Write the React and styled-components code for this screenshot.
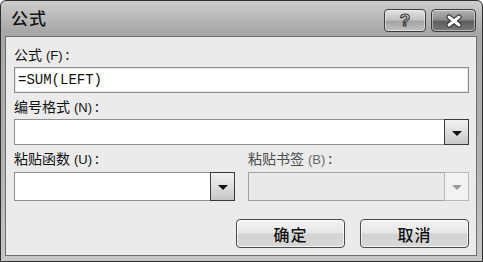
import React from 'react';
import styled, { createGlobalStyle } from 'styled-components';

const GlobalStyle = createGlobalStyle`
  html, body {
    margin: 0;
    padding: 0;
    background: #ffffff;
  }
  body {
    font-family: "Noto Sans CJK SC", "Liberation Sans", sans-serif;
  }
`;

const Window = styled.div`
  width: 483px;
  height: 262px;
  box-sizing: border-box;
  border: 1px solid #2e2e2e;
  border-radius: 6px 6px 0 0;
  background: linear-gradient(180deg, #cdcdcd 0%, #a7a7a7 12%, #b1b1b1 60%, #c6c6c6 100%);
  display: flex;
  flex-direction: column;
  overflow: hidden;
`;

const TitleBar = styled.div`
  height: 35px;
  display: flex;
  align-items: center;
  justify-content: space-between;
  padding: 0 6px 0 10px;
  flex-shrink: 0;
`;

const Title = styled.span`
  font-size: 17px;
  font-weight: 500;
  color: #111;
  letter-spacing: 1px;
  margin-top: -2px;
`;

const Caption = styled.div`
  display: flex;
  gap: 5px;
  margin-top: 4px;
`;

const CaptionButton = styled.div`
  width: ${p => p.$w}px;
  height: 23px;
  box-sizing: border-box;
  border: 1px solid #3c3c3c;
  border-radius: 4px;
  display: flex;
  align-items: center;
  justify-content: center;
  box-shadow: inset 0 0 0 1px rgba(255, 255, 255, 0.45);
  background: ${p => p.$dark
    ? 'linear-gradient(180deg, #b5b5b5 0%, #8c8c8c 45%, #5e5e5e 55%, #7a7a7a 100%)'
    : 'linear-gradient(180deg, #e2e2e2 0%, #c4c4c4 45%, #a4a4a4 55%, #c0c0c0 100%)'};
`;

const HelpMark = styled.span`
  font-family: "Liberation Sans", sans-serif;
  font-size: 17px;
  font-weight: 700;
  color: #f2f2f2;
  -webkit-text-stroke: 1.2px #3a3a3a;
  line-height: 1;
`;

const Client = styled.div`
  flex: 1;
  margin: 0 5px 5px 4px;
  border: 1px solid #6e6e6e;
  background: #ebebeb;
  padding: 5px 7px 0 8px;
  display: flex;
  flex-direction: column;
`;

const Label = styled.div`
  height: ${p => p.$h}px;
  line-height: ${p => p.$h}px;
  font-size: 14px;
  color: ${p => (p.$disabled ? '#4a4a4a' : '#111')};
  white-space: nowrap;
`;

const Key = styled.span`
  font-family: "Liberation Sans", sans-serif;
  font-size: 13px;
  margin: 0 3px 0 4px;
  color: ${p => (p.$disabled ? '#6a6a6a' : '#111')};
`;

const TextBox = styled.div`
  height: ${p => p.$h}px;
  box-sizing: border-box;
  border: 1px solid #8f8f8f;
  box-shadow: inset 0 0 0 1px #e4e4e4;
  background: #ffffff;
  display: flex;
  align-items: center;
  padding-left: 3px;
  font-family: "Liberation Mono", monospace;
  font-size: 14px;
  color: #111;
`;

const Combo = styled.div`
  height: ${p => p.$h}px;
  box-sizing: border-box;
  border: 1px solid ${p => (p.$disabled ? '#a0a0a0' : '#8f8f8f')};
  background: ${p => (p.$disabled ? '#e9e9e9' : '#ffffff')};
  display: flex;
  justify-content: flex-end;
  align-items: stretch;
`;

const DropButton = styled.div`
  width: 25px;
  box-sizing: border-box;
  border: 1px solid ${p => (p.$disabled ? '#b8b8b8' : '#3a3a3a')};
  background: ${p => p.$disabled
    ? '#f2f2f2'
    : 'linear-gradient(180deg, #f2f2f2 0%, #dedede 50%, #c6c6c6 100%)'};
  display: flex;
  align-items: center;
  justify-content: center;
  margin: -1px -1px -1px 0;
`;

const Arrow = styled.div`
  width: 0;
  height: 0;
  border-left: 5px solid transparent;
  border-right: 5px solid transparent;
  border-top: 5px solid ${p => (p.$disabled ? '#9a9a9a' : '#111')};
  margin-top: 2px;
`;

const Row = styled.div`
  display: flex;
  gap: 13px;
`;

const Column = styled.div`
  flex: ${p => p.$flex};
  display: flex;
  flex-direction: column;
`;

const Footer = styled.div`
  display: flex;
  justify-content: flex-end;
  gap: 15px;
  margin-top: 18px;
`;

const PushButton = styled.div`
  width: 109px;
  height: 29px;
  box-sizing: border-box;
  border: 1px solid #4a4a4a;
  border-radius: 4px;
  background: linear-gradient(180deg, #f4f4f4 0%, #e6e6e6 48%, #d2d2d2 52%, #d8d8d8 100%);
  box-shadow: inset 0 0 0 1px rgba(255, 255, 255, 0.7);
  display: flex;
  align-items: center;
  justify-content: center;
  font-size: 16px;
  font-weight: 500;
  color: #111;
  letter-spacing: 1px;
`;

const ComboBox = ({ height, disabled }) => (
  <Combo $h={height} $disabled={disabled}>
    <DropButton $disabled={disabled}>
      <Arrow $disabled={disabled} />
    </DropButton>
  </Combo>
);

const CloseIcon = () => (
  <svg width="18" height="14" viewBox="0 0 18 14">
    <path d="M4 3 L14 11 M14 3 L4 11" stroke="#2a2a2a" strokeWidth="5" strokeLinecap="round" />
    <path d="M4 3 L14 11 M14 3 L4 11" stroke="#ffffff" strokeWidth="3" strokeLinecap="round" />
  </svg>
);

const App = () => (
  <>
    <GlobalStyle />
    <Window>
      <TitleBar>
        <Title>公式</Title>
        <Caption>
          <CaptionButton $w={42}>
            <HelpMark>?</HelpMark>
          </CaptionButton>
          <CaptionButton $w={45} $dark>
            <CloseIcon />
          </CaptionButton>
        </Caption>
      </TitleBar>
      <Client>
        <Label $h={25}>公式<Key>(F)</Key>:</Label>
        <TextBox $h={26}>=SUM(LEFT)</TextBox>
        <Label $h={26}>编号格式<Key>(N)</Key>:</Label>
        <ComboBox height={26} />
        <Row>
          <Column $flex="0 0 221px">
            <Label $h={27}>粘贴函数<Key>(U)</Key>:</Label>
            <ComboBox height={29} />
          </Column>
          <Column $flex="1">
            <Label $h={27} $disabled>粘贴书签<Key $disabled>(B)</Key>:</Label>
            <ComboBox height={29} disabled />
          </Column>
        </Row>
        <Footer>
          <PushButton>确定</PushButton>
          <PushButton>取消</PushButton>
        </Footer>
      </Client>
    </Window>
  </>
);

export default App;
